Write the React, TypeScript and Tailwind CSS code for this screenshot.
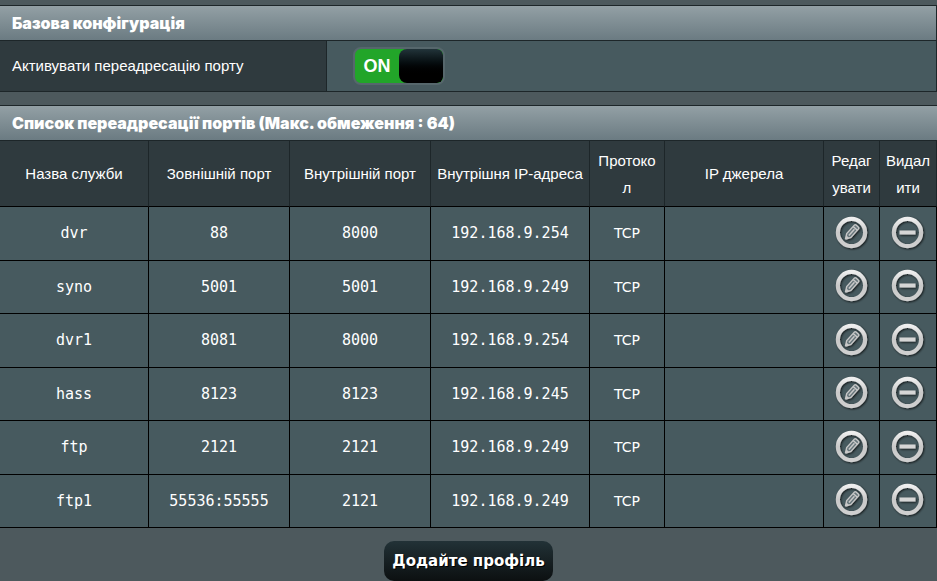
import React, { useState } from "react";

const columns = [
  { title: "Назва служби", width: "w-[149px]" },
  { title: "Зовнішній порт", width: "w-[141px]" },
  { title: "Внутрішній порт", width: "w-[141px]" },
  { title: "Внутрішня IP-адреса", width: "w-[159px]" },
  { title: "Протокол", width: "w-[75px]" },
  { title: "IP джерела", width: "w-[159px]" },
  { title: "Редагувати", width: "w-[56px]" },
  { title: "Видалити", width: "w-[57px]" },
];

const initialRules = [
  { name: "dvr", external: "88", internal: "8000", ip: "192.168.9.254", protocol: "TCP", source: "" },
  { name: "syno", external: "5001", internal: "5001", ip: "192.168.9.249", protocol: "TCP", source: "" },
  { name: "dvr1", external: "8081", internal: "8000", ip: "192.168.9.254", protocol: "TCP", source: "" },
  { name: "hass", external: "8123", internal: "8123", ip: "192.168.9.245", protocol: "TCP", source: "" },
  { name: "ftp", external: "2121", internal: "2121", ip: "192.168.9.249", protocol: "TCP", source: "" },
  { name: "ftp1", external: "55536:55555", internal: "2121", ip: "192.168.9.249", protocol: "TCP", source: "" },
];

function IconDefs() {
  return (
    <svg className="absolute h-0 w-0" aria-hidden="true">
      <defs>
        <linearGradient id="metal" x1="0" y1="0" x2="0" y2="1">
          <stop offset="0" stopColor="#eeeeee" />
          <stop offset="0.5" stopColor="#c9c9c9" />
          <stop offset="1" stopColor="#d0d0d0" />
        </linearGradient>
        <filter id="drop" x="-20%" y="-20%" width="150%" height="150%">
          <feDropShadow dx="1" dy="1" stdDeviation="1" floodColor="#000" floodOpacity="0.75" />
        </filter>
      </defs>
    </svg>
  );
}

function EditIcon() {
  return (
    <svg viewBox="0 0 38 38" className="h-[38px] w-[38px]" aria-hidden="true">
      <g filter="url(#drop)">
        <circle cx="18.5" cy="17.5" r="13.6" fill="none" stroke="url(#metal)" strokeWidth="4.2" />
        <g transform="translate(18.5 17.5) rotate(42)">
          <path
            d="M-2.8 -7.4 Q-2.8 -8.6 -1.6 -8.6 H1.6 Q2.8 -8.6 2.8 -7.4 V4 L0.4 8.4 H-0.4 L-2.8 4 Z"
            fill="#66757a"
            stroke="#c8c8c8"
            strokeWidth="1.4"
          />
          <path d="M-2.8 -5.6 H2.8 M0 -4.4 V4" stroke="#c8c8c8" strokeWidth="1.5" />
          <path d="M-1.6 5.6 H1.6 L0 9.4 Z" fill="#c8c8c8" />
        </g>
      </g>
    </svg>
  );
}

function RemoveIcon() {
  return (
    <svg viewBox="0 0 38 38" className="h-[38px] w-[38px]" aria-hidden="true">
      <g filter="url(#drop)">
        <circle cx="18.5" cy="17.5" r="13.6" fill="none" stroke="url(#metal)" strokeWidth="4.2" />
        <rect x="10.5" y="15.5" width="16" height="4" fill="#d6d6d6" />
      </g>
    </svg>
  );
}

function SectionTitle({ id, children }: { id: string; children: React.ReactNode }) {
  return (
    <h2
      id={id}
      className="h-9 border-y border-t-[#1d2629] border-b-[#1d2629] bg-linear-to-b from-[#93a0a5] to-[#6b7b82] pl-3 font-[Inter,sans-serif] text-[16px] leading-[34px] font-black"
    >
      {children}
    </h2>
  );
}

export default function App() {
  const [enabled, setEnabled] = useState(true);
  const [rules, setRules] = useState(initialRules);

  return (
    <main className="min-h-screen bg-[#4d595d] pt-[5px] font-['Liberation_Sans',sans-serif] text-[15px] text-white">
      <IconDefs />
      <section aria-labelledby="basic" className="border-r border-[#1d2629]">
        <SectionTitle id="basic">Базова конфігурація</SectionTitle>
        <div className="flex h-[51px] border-b border-[#1d2629]">
          <label
            htmlFor="enable"
            className="flex w-[327px] items-center border-r border-[#1d2629] bg-[#2f3a3e] pl-3"
          >
            Активувати переадресацію порту
          </label>
          <div className="flex flex-1 items-center bg-[#475a5f] pl-[26px]">
            <button
              id="enable"
              role="switch"
              aria-checked={enabled}
              onClick={() => setEnabled(!enabled)}
              className={`flex h-[38px] w-[92px] items-stretch overflow-hidden rounded-lg border-2 border-[#56676c] ${enabled ? "bg-[#22a529]" : "flex-row-reverse bg-[#596e74]"}`}
            >
              <span className="flex flex-1 items-center justify-center text-[18px] font-bold">
                {enabled ? "ON" : "OFF"}
              </span>
              <span className="w-11 rounded-l-lg rounded-r-md bg-linear-to-b from-[#22343a] to-black to-80%" />
            </button>
          </div>
        </div>
      </section>

      <section aria-labelledby="list" className="mt-[13px]">
        <SectionTitle id="list">Список переадресації портів (Макс. обмеження : 64)</SectionTitle>
        <table aria-labelledby="list" className="w-full table-fixed border-separate border-spacing-0 text-center">
          <thead>
            <tr className="h-[66px] bg-[#2f3a3e]">
              {columns.map((c) => (
                <th
                  key={c.title}
                  className={`${c.width} border-r border-b border-r-[#1d2629] border-b-black px-[5px] leading-[27px] font-normal break-words`}
                >
                  {c.title}
                </th>
              ))}
            </tr>
          </thead>
          <tbody className="font-['DejaVu_Sans_Mono',monospace] [&_td]:border-r [&_td]:border-b [&_td]:border-black">
            {rules.map((r) => (
              <tr key={r.name} className="h-[54px] bg-[#475a5f] even:h-[53px]">
                <td>{r.name}</td>
                <td>{r.external}</td>
                <td>{r.internal}</td>
                <td>{r.ip}</td>
                <td className="font-['DejaVu_Sans',sans-serif] text-[14px]">{r.protocol}</td>
                <td>{r.source}</td>
                <td>
                  <button aria-label="Редагувати" className="block mx-auto">
                    <EditIcon />
                  </button>
                </td>
                <td>
                  <button
                    aria-label="Видалити"
                    className="block mx-auto"
                    onClick={() => setRules(rules.filter((x) => x.name !== r.name))}
                  >
                    <RemoveIcon />
                  </button>
                </td>
              </tr>
            ))}
          </tbody>
        </table>
      </section>

      <div className="flex justify-center pt-[13px]">
        <button className="h-10 rounded-[10px] bg-linear-to-b from-[#223237] to-[#0c1011] px-2 font-['DejaVu_Sans',sans-serif] text-[15px] font-bold [text-shadow:1px_1px_0_#000]">
          Додайте профіль
        </button>
      </div>
    </main>
  );
}
